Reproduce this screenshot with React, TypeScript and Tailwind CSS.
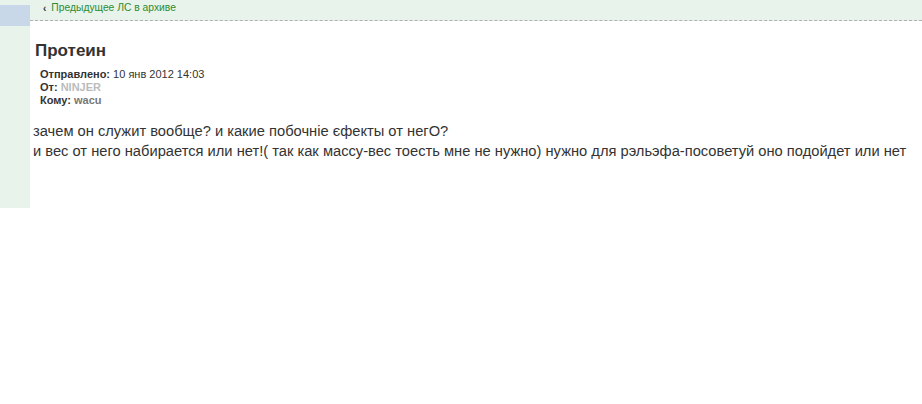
export default function App() {
  return (
    <div className="flex w-[922px] h-[404px] bg-white text-[#333] font-['Liberation_Sans',Arial,sans-serif]">
      {/* Левая колонка */}
      <div className="w-[30px] h-[208px] bg-[#e8f3eb] pt-[5px]">
        <div className="h-[21px] bg-[#c9d8e9]" />
      </div>

      <div className="flex-1 flex flex-col">
        {/* Верхняя панель */}
        <div className="h-[21px] bg-[#e8f3eb] border-b border-dashed border-[#b0b0b0] flex items-center pl-[13px] pb-[3px]">
          <span className="text-[10px] font-bold text-[#333] mr-[5px] leading-none">‹</span>
          <a className="text-[10.3px] text-[#2e8b2e] leading-none">Предыдущее ЛС в архиве</a>
        </div>

        <div className="pl-[3px]">
          <h1 className="text-[17px] font-bold text-[#333] mt-[20px] leading-[20px] pl-[2px]">Протеин</h1>

          <div className="mt-[7px] pl-[7px] text-[11px] leading-[13px]">
            <div>
              <b>Отправлено:</b> 10 янв 2012 14:03
            </div>
            <div>
              <b>От:</b> <b className="text-[#bbb]">NINJER</b>
            </div>
            <div>
              <b>Кому:</b> <b className="text-[#777]">wacu</b>
            </div>
          </div>

          <div className="mt-[14px] text-[14.7px] leading-[20px]">
            <p>зачем он служит вообще? и какие побочніе єфекты от негО?</p>
            <p>и вес от него набирается или нет!( так как массу-вес тоесть мне не нужно) нужно для рэльэфа-посоветуй оно подойдет или нет</p>
          </div>
        </div>
      </div>
    </div>
  )
}
